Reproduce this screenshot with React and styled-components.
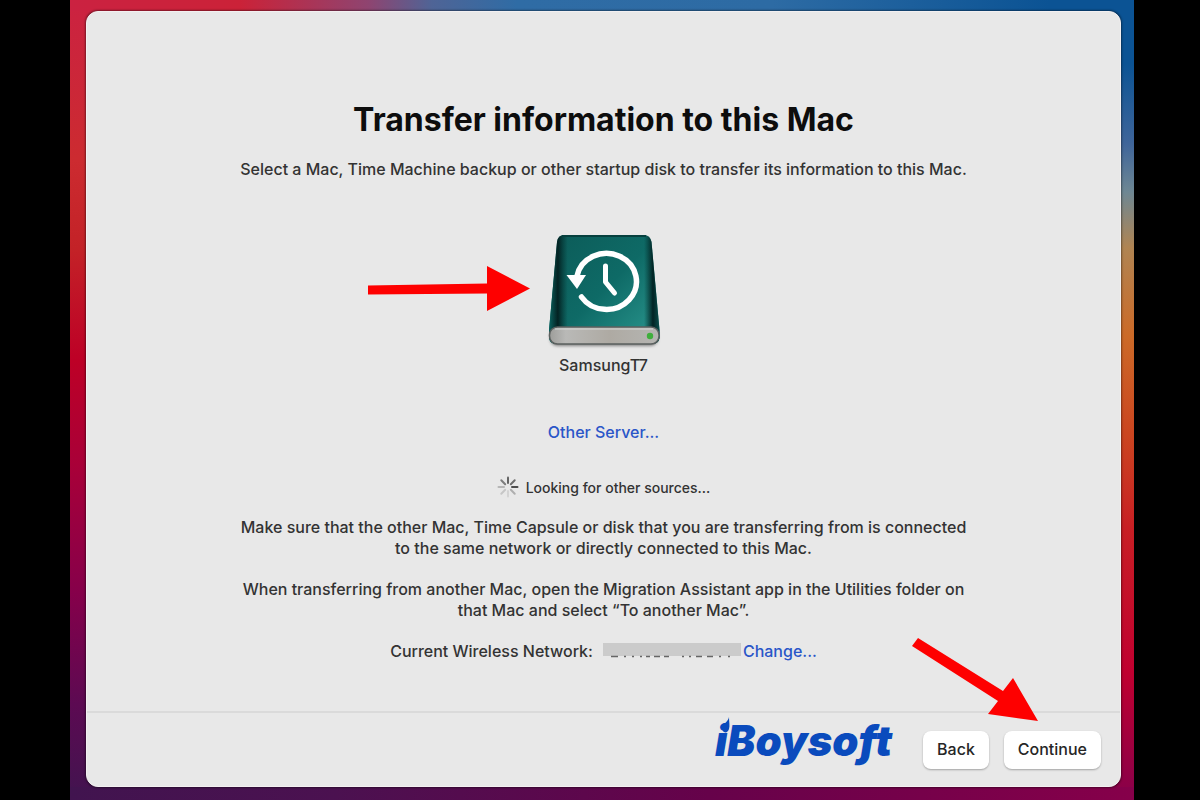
import React from "react";
import styled, { createGlobalStyle } from "styled-components";

const spokes = [0.8, 0.75, 0.95, 0.35, 0.12, 0.2, 0.3, 0.65];

function TimeMachineDrive() {
  return (
    <DriveSvg viewBox="0 0 116 116" aria-hidden="true">
      <defs>
        <linearGradient id="driveTop" x1="0" y1="0" x2="1" y2="1">
          <stop offset="0" stopColor="#0c5b58" />
          <stop offset="0.5" stopColor="#0e6a66" />
          <stop offset="0.85" stopColor="#238b84" />
          <stop offset="1" stopColor="#0d5552" />
        </linearGradient>
        <linearGradient id="driveSide" x1="0" y1="0" x2="1" y2="0">
          <stop offset="0" stopColor="#0b6460" />
          <stop offset="0.08" stopColor="#032222" />
          <stop offset="0.17" stopColor="#04302f" stopOpacity="0" />
          <stop offset="0.86" stopColor="#04302f" stopOpacity="0" />
          <stop offset="0.94" stopColor="#022424" />
          <stop offset="1" stopColor="#0b4f4c" />
        </linearGradient>
        <linearGradient id="driveFront" x1="0" y1="0" x2="1" y2="0">
          <stop offset="0" stopColor="#9d9d9a" />
          <stop offset="0.15" stopColor="#b9b9b7" />
          <stop offset="0.55" stopColor="#aeaaa3" />
          <stop offset="1" stopColor="#b5b5b2" />
        </linearGradient>
        <filter id="driveShadow" x="-10%" y="-50%" width="120%" height="200%">
          <feGaussianBlur stdDeviation="1.6" />
        </filter>
      </defs>
      <path
        d="M4 100h108v6q-1 7-8 7H12q-7 0-8-7z"
        fill="#555"
        opacity="0.7"
        filter="url(#driveShadow)"
      />
      <path
        d="M18 2h80q6 0 7.500 7L113.500 97v8q-1 6-8 6H11q-7 0-8-6v-8L11 9q1-7 7-7z"
        fill="url(#driveTop)"
      />
      <path
        d="M18 2h80q6 0 7.500 7L113.500 97v8q-1 6-8 6H11q-7 0-8-6v-8L11 9q1-7 7-7z"
        fill="url(#driveSide)"
      />
      <path d="M16 3h84" stroke="#06403e" strokeWidth="2" />
      <rect
        x="3.500"
        y="94"
        width="109.500"
        height="17"
        rx="8"
        fill="url(#driveFront)"
        stroke="#5b605f"
        strokeWidth="1.500"
      />
      <path d="M9 96h98" stroke="#d5d8d6" strokeWidth="1" />
      <circle cx="104" cy="103" r="3.200" fill="#3fae3c" />
      <path
        d="M31 43A30 28 0 1 1 35.500 64"
        fill="none"
        stroke="#fff"
        strokeWidth="5.500"
        strokeLinecap="round"
      />
      <path d="M20.500 42h19.500l-9 14z" fill="#fff" />
      <path
        d="M59.500 33v16l9 11"
        fill="none"
        stroke="#fff"
        strokeWidth="5"
        strokeLinecap="round"
        strokeLinejoin="round"
      />
    </DriveSvg>
  );
}

function Spinner() {
  return (
    <SpinnerSvg viewBox="0 0 22 22" aria-hidden="true">
      {spokes.map((opacity, i) => (
        <path
          key={i}
          d="M11 1.500v5.500"
          stroke="#444"
          strokeWidth="2"
          strokeLinecap="round"
          opacity={opacity}
          transform={`rotate(${i * 45} 11 11)`}
        />
      ))}
    </SpinnerSvg>
  );
}

export default function App() {
  return (
    <Desktop>
      <GlobalStyle />
      <Window>
        <Content>
          <Title>Transfer information to this Mac</Title>
          <Text>
            Select a Mac, Time Machine backup or other startup disk to transfer
            its information to this Mac.
          </Text>

          <Source type="button">
            <DriveArrow viewBox="0 0 162 46" aria-hidden="true">
              <path d="M0 19.500L119 17.500V0L162 22.500L119 45V27.500L0 28.500z" />
            </DriveArrow>
            <TimeMachineDrive />
            SamsungT7
          </Source>

          <Link href="#server">Other Server...</Link>

          <Status role="status">
            <Spinner />
            Looking for other sources...
          </Status>

          <Text>
            Make sure that the other Mac, Time Capsule or disk that you are
            transferring from is connected
            <br />
            to the same network or directly connected to this Mac.
          </Text>
          <Text>
            When transferring from another Mac, open the Migration Assistant app
            in the Utilities folder on
            <br />
            that Mac and select “To another Mac”.
          </Text>

          <Network>
            Current Wireless Network:
            <Redacted viewBox="0 0 138 18" aria-hidden="true">
              <path d="M0 0h138v13H0z" fill="#cbcbcb" />
              <path
                d="M8 13.500h7M21 13.500h2M29 13.500h2M37 13.500h2M43 13.500h4M51 13.500h6M61 13.500h5M79 13.500h2M86 13.500h2M93 13.500h6M104 13.500h6M116 13.500h2M125 13.500h2"
                stroke="#666"
                strokeWidth="1.500"
              />
            </Redacted>
            <Link href="#network">Change...</Link>
          </Network>
        </Content>

        <Footer>
          <Logo>
            iBoysoft
            <Flame viewBox="0 0 8 16" aria-hidden="true">
              <path d="M7 0C7 5 8 9 7 12C6 15 4 16 2 15C0 14 0 11 1 9C2 6 6 5 7 0z" />
            </Flame>
          </Logo>
          <Button type="button">Back</Button>
          <Button type="button">
            Continue
            <ContinueArrow viewBox="0 0 126 84" aria-hidden="true">
              <path d="M6 0L91 53L101 40L126 83L76 76L86 63L0 8z" />
            </ContinueArrow>
          </Button>
        </Footer>
      </Window>
    </Desktop>
  );
}

const GlobalStyle = createGlobalStyle`
  * {
    box-sizing: border-box;
  }

  body {
    margin: 0;
    background: #000;
    color: #333;
    font-family: Inter, "Liberation Sans", sans-serif;
    font-size: 16px;
    font-weight: 500;
    line-height: 21px;
  }
`;

const Desktop = styled.div`
  display: flex;
  min-height: 100vh;
  margin: 0 66px 0 70px;
  padding: 11px 13px 13px 16px;
  background:
    linear-gradient(
        90deg,
        #cb2241,
        #cb2238 16%,
        #8f4470 28%,
        #4f6496 34%,
        #2f6ca5 42%,
        #2d6ba4 66%,
        #0b5394 92%
      )
      top / 100% 11px no-repeat,
    linear-gradient(90deg, #41144f, #4b1150 25%, #66024a 60%, #86004a) bottom /
      100% 13px no-repeat,
    linear-gradient(
        #cb2241,
        #cc2b30 20%,
        #c32227 31%,
        #bd0026 45%,
        #a90038 58%,
        #86004a 74%,
        #5c0a52 88%,
        #41144f
      )
      left / 50% 100% no-repeat,
    linear-gradient(
        #0b5394,
        #0b5394 8%,
        #3f659a 18%,
        #6e8793 24%,
        #b08452 31%,
        #cc6a28 42%,
        #cb4620 54%,
        #c81f24 66%,
        #c00030 84%,
        #86004a
      )
      right / 50% 100% no-repeat;
`;

const Window = styled.main`
  display: flex;
  flex: 1;
  flex-direction: column;
  border: 1px solid #f3f0f1;
  border-radius: 12px;
  background: #e8e8e8;
  box-shadow: 0 0 2px 1px rgba(0, 0, 0, 0.4);
`;

const Content = styled.div`
  display: flex;
  flex: 1;
  flex-direction: column;
  align-items: center;
  padding: 87px 24px 24px;
  text-align: center;
`;

const Title = styled.h1`
  margin: 0 0 18px;
  color: #0d0d0d;
  font-size: 32px;
  font-weight: 700;
  line-height: 42px;
`;

const Text = styled.p`
  margin: 0 0 20px;
`;

const Source = styled.button`
  position: relative;
  display: flex;
  flex-direction: column;
  align-items: center;
  gap: 6px;
  margin: 33px 0 46px;
  padding: 0;
  border: 0;
  background: none;
  color: inherit;
  font: inherit;
`;

const DriveSvg = styled.svg`
  width: 116px;
  height: 116px;
`;

const DriveArrow = styled.svg`
  position: absolute;
  top: 33px;
  right: 50%;
  width: 162px;
  height: 46px;
  margin-right: 74px;
  fill: #fe0000;
`;

const Link = styled.a`
  color: #2a56c8;
  text-decoration: none;
`;

const Status = styled.div`
  display: flex;
  align-items: center;
  gap: 7px;
  margin: 33px 0 19px;
  font-size: 14px;
`;

const SpinnerSvg = styled.svg`
  width: 22px;
  height: 22px;
`;

const Network = styled.div`
  display: flex;
  align-items: center;
`;

const Redacted = styled.svg`
  width: 138px;
  height: 18px;
  margin: 0 2px 0 10px;
`;

const Footer = styled.footer`
  display: flex;
  align-items: center;
  justify-content: flex-end;
  gap: 15px;
  height: 75px;
  padding: 0 19px;
  border-top: 2px solid #dadada;
`;

const Logo = styled.div`
  position: relative;
  align-self: flex-start;
  margin-right: 16px;
  color: #0a4bbd;
  font-family: Inter, sans-serif;
  font-size: 42px;
  font-style: italic;
  font-weight: 900;
  line-height: 56px;
`;

const Flame = styled.svg`
  position: absolute;
  top: 4px;
  left: 7px;
  width: 8px;
  height: 16px;
  fill: #0a4bbd;
`;

const Button = styled.button`
  position: relative;
  height: 38px;
  padding: 0 14px;
  border: 0;
  border-radius: 8px;
  background: #fff;
  box-shadow: 0 1px 2px rgba(0, 0, 0, 0.3);
  color: #262626;
  font: inherit;
`;

const ContinueArrow = styled.svg`
  position: absolute;
  right: 63px;
  bottom: 47px;
  width: 126px;
  height: 84px;
  fill: #fe0000;
`;
